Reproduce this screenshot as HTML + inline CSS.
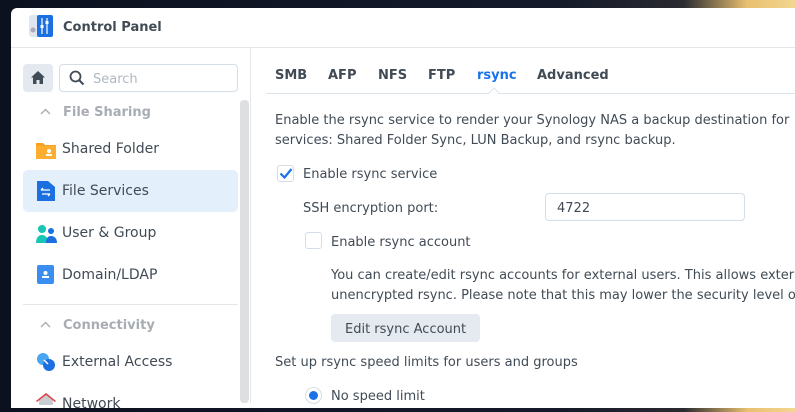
<!DOCTYPE html>
<html><head><meta charset="utf-8"><style>
*{margin:0;padding:0;box-sizing:border-box}
body{width:795px;height:403px;overflow:hidden;background:linear-gradient(90deg,#0c1120 0%,#141a2a 70%,#2a2a30 86%,#e8c070 94%,#f3d690 100%);font-family:"DejaVu Sans","Liberation Sans",sans-serif;color:#414b55;position:relative}
.win{position:absolute;left:11px;top:8px;width:800px;height:400px;background:#fff;border-radius:6px 0 0 0}
.a{position:absolute;white-space:nowrap}
.t{font-size:13px}
.b{font-weight:bold}
</style></head><body>
<div class="win"></div>
<svg class="a" style="left:29px;top:15px" width="25" height="24" viewBox="0 0 25 24"><rect x="0" y="0" width="24" height="22" rx="3" fill="#dfe6ee"/><rect x="8" y="0" width="16" height="22" rx="2" fill="#1b6fe0"/><circle cx="4" cy="15" r="2.5" fill="#aab"/><line x1="13" y1="3" x2="13" y2="19" stroke="#fff" stroke-width="1.2"/><line x1="18" y1="3" x2="18" y2="19" stroke="#fff" stroke-width="1.2"/><rect x="11.5" y="10" width="3" height="3" fill="#fff"/><rect x="16.5" y="6" width="3" height="3" fill="#fff"/></svg>
<div class="a b" style="left:63px;top:20px;font-size:13px;color:#414b55">Control Panel</div>
<div class="a" style="left:11px;top:47px;width:784px;height:1px;background:#e3e7ec"></div>
<div class="a" style="left:250px;top:48px;width:1px;height:355px;background:#e3e7ec"></div>
<div class="a" style="left:23px;top:64px;width:30px;height:28px;background:#e4e9ef;border-radius:4px"></div>
<svg class="a" style="left:30px;top:70px" width="16" height="15" viewBox="0 0 16 15"><path d="M8 1L1 7.5H3V14H6.5V10H9.5V14H13V7.5H15Z" fill="#414b55"/></svg>
<div class="a" style="left:59px;top:64px;width:179px;height:28px;border:1px solid #d5dde6;border-radius:4px"></div>
<svg class="a" style="left:69px;top:70px" width="16" height="16" viewBox="0 0 16 16"><circle cx="6.5" cy="6.5" r="5" fill="none" stroke="#414b55" stroke-width="1.8"/><line x1="10" y1="10" x2="14.5" y2="14.5" stroke="#414b55" stroke-width="2"/></svg>
<div class="a t" style="left:93px;top:72px;color:#b0b8c2">Search</div>
<div class="a" style="left:240px;top:100px;width:9px;height:303px;background:#dedfe0;border-radius:4px"></div>
<svg class="a" style="left:40px;top:108px" width="11" height="7" viewBox="0 0 11 7"><path d="M1 6L5.5 1.5L10 6" fill="none" stroke="#a8adb3" stroke-width="1.4"/></svg>
<div class="a t b" style="left:63px;top:105px;color:#a8adb3">File Sharing</div>
<svg class="a" style="left:36px;top:141px" width="20" height="18" viewBox="0 0 20 18"><path d="M0 2h7l2 2h11v14H0z" fill="#f8a026"/><rect x="0" y="5" width="20" height="13" fill="#fdae2e"/><circle cx="13" cy="10" r="2" fill="#fff"/><rect x="10" y="13" width="6" height="2" fill="#fff"/></svg>
<div class="a" style="left:62px;top:141px;font-size:14px">Shared Folder</div>
<div class="a" style="left:23px;top:170px;width:215px;height:42px;background:#e3effb;border-radius:5px"></div>
<svg class="a" style="left:37px;top:181px" width="18" height="20" viewBox="0 0 18 20"><path d="M0 0h11l7 6v14H0z" fill="#1b6fe0"/><path d="M4 9h9M4 9l2-2M13 13H5M13 13l-2 2" stroke="#fff" stroke-width="1.3" fill="none"/></svg>
<div class="a" style="left:62px;top:183px;font-size:14px">File Services</div>
<svg class="a" style="left:36px;top:224px" width="21" height="19" viewBox="0 0 21 19"><circle cx="6" cy="5" r="4" fill="#17c6b3"/><path d="M0 19c0-6 3-8 6-8s6 2 6 8z" fill="#17c6b3"/><circle cx="15" cy="7" r="3" fill="#1b6fe0"/><path d="M10 19c0-5 2-7 5-7s6 2 6 7z" fill="#1b6fe0"/></svg>
<div class="a" style="left:62px;top:225px;font-size:14px">User &amp; Group</div>
<svg class="a" style="left:37px;top:265px" width="17" height="19" viewBox="0 0 17 19"><rect width="17" height="19" rx="2" fill="#3a8ef0"/><circle cx="8.5" cy="8" r="2" fill="#fff"/><rect x="5" y="11" width="7" height="2" fill="#fff"/></svg>
<div class="a" style="left:62px;top:267px;font-size:14px">Domain/LDAP</div>
<div class="a" style="left:23px;top:304px;width:215px;height:1px;background:#e3e7ec"></div>
<svg class="a" style="left:40px;top:321px" width="11" height="7" viewBox="0 0 11 7"><path d="M1 6L5.5 1.5L10 6" fill="none" stroke="#a8adb3" stroke-width="1.4"/></svg>
<div class="a t b" style="left:63px;top:318px;color:#a8adb3">Connectivity</div>
<svg class="a" style="left:36px;top:352px" width="20" height="20" viewBox="0 0 20 20"><circle cx="7" cy="7" r="6" fill="#49a6f5"/><circle cx="13" cy="13" r="6" fill="#1b6fe0"/><line x1="8" y1="8" x2="12" y2="12" stroke="#fff" stroke-width="1.5"/></svg>
<div class="a" style="left:62px;top:354px;font-size:14px">External Access</div>
<svg class="a" style="left:36px;top:393px" width="20" height="12" viewBox="0 0 20 12"><path d="M10 0L0 8h3v4h14V8h3z" fill="#c9cdd2"/><path d="M10 0L0 8l1 1 9-7 9 7 1-1z" fill="#e04444"/></svg>
<div class="a" style="left:62px;top:396px;font-size:14px">Network</div>
<div class="a t b" style="left:275px;top:68px">SMB</div>
<div class="a t b" style="left:328px;top:68px">AFP</div>
<div class="a t b" style="left:378px;top:68px">NFS</div>
<div class="a t b" style="left:428px;top:68px">FTP</div>
<div class="a t b" style="left:477px;top:68px;color:#1a73e8">rsync</div>
<div class="a t b" style="left:537px;top:68px">Advanced</div>
<div class="a" style="left:266px;top:93px;width:529px;height:1px;background:#dde3ea"></div>
<div class="a" style="left:490px;top:89px;width:8px;height:8px;background:#fff;border-left:1px solid #dde3ea;border-top:1px solid #dde3ea;transform:rotate(45deg)"></div>
<div class="a t" style="left:275px;top:113px">Enable the rsync service to render your Synology NAS a backup destination for</div>
<div class="a t" style="left:275px;top:133px">services: Shared Folder Sync, LUN Backup, and rsync backup.</div>
<div class="a" style="left:277px;top:165px;width:17px;height:17px;border:1px solid #d5dde6;border-radius:3px"></div>
<svg class="a" style="left:279px;top:167px" width="14" height="13" viewBox="0 0 14 13"><path d="M1.5 6.5L5.5 10.5L12.5 2" fill="none" stroke="#1a73e8" stroke-width="2.2"/></svg>
<div class="a t" style="left:303px;top:167px">Enable rsync service</div>
<div class="a t" style="left:303px;top:201px">SSH encryption port:</div>
<div class="a" style="left:545px;top:193px;width:200px;height:28px;border:1px solid #d5dde6;border-radius:4px"></div>
<div class="a t" style="left:557px;top:201px">4722</div>
<div class="a" style="left:305px;top:232px;width:17px;height:17px;border:1px solid #d5dde6;border-radius:3px"></div>
<div class="a t" style="left:331px;top:235px">Enable rsync account</div>
<div class="a t" style="left:331px;top:268px">You can create/edit rsync accounts for external users. This allows external</div>
<div class="a t" style="left:331px;top:288px">unencrypted rsync. Please note that this may lower the security level of</div>
<div class="a" style="left:331px;top:314px;width:149px;height:28px;background:#e5eaf0;border-radius:4px"></div>
<div class="a t" style="left:345px;top:322px">Edit rsync Account</div>
<div class="a t" style="left:275px;top:355px">Set up rsync speed limits for users and groups</div>
<div class="a" style="left:305px;top:387px;width:17px;height:17px;border:1px solid #d5dde6;border-radius:50%"></div>
<div class="a" style="left:309px;top:391px;width:9px;height:9px;background:#1a73e8;border-radius:50%"></div>
<div class="a t" style="left:331px;top:389px">No speed limit</div>
</body></html>
